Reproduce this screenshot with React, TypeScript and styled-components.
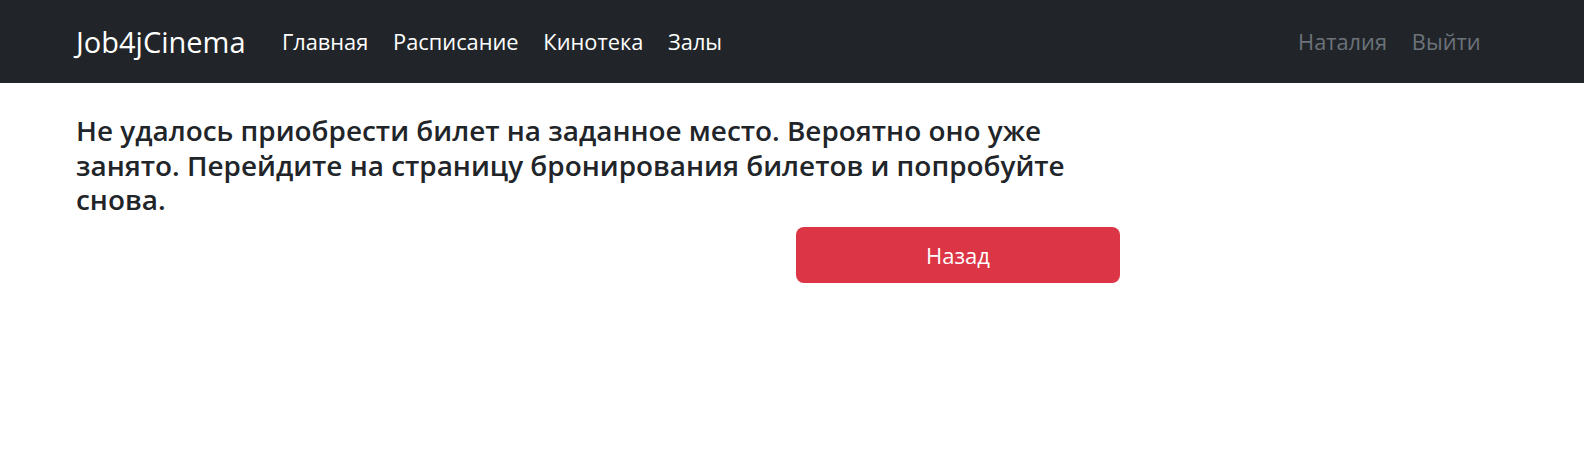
import React from "react";
import styled, { createGlobalStyle } from "styled-components";

const Global = createGlobalStyle`
  html, body { margin: 0; padding: 0; background: #fff; }
  body {
    font-family: "Open Sans", "Noto Sans", "DejaVu Sans", sans-serif;
    color: #212529;
    -webkit-font-smoothing: antialiased;
  }
  * { box-sizing: border-box; }
`;

const NavBar = styled.nav`
  height: 83px;
  background: #212529;
  display: flex;
  align-items: center;
  padding: 0 91px 0 76px;
`;

const Brand = styled.a`
  font-size: 29px;
  color: #fff;
  text-decoration: none;
  margin-right: 24px;
`;

const NavList = styled.div<{ $right?: boolean }>`
  display: flex;
  align-items: center;
  margin-left: ${(p) => (p.$right ? "auto" : "0")};
`;

const NavLink = styled.a<{ $muted?: boolean }>`
  font-size: 21.8px;
  color: ${(p) => (p.$muted ? "#6c737b" : "#fff")};
  text-decoration: none;
  padding: 0 12.4px;
`;

const Main = styled.main`
  padding: 0 0 0 76px;
  width: 1120px;
`;

const Message = styled.h5`
  margin: 30px 0 0;
  max-width: 1040px;
  font-size: 27.9px;
  line-height: 34.5px;
  font-weight: 600;
  color: #212529;
`;

const ButtonRow = styled.div`
  display: flex;
  justify-content: flex-end;
  margin-top: 10px;
`;

const DangerButton = styled.button`
  width: 324px;
  height: 56px;
  background: #dc3545;
  color: #fff;
  border: none;
  border-radius: 8px;
  font-family: inherit;
  font-size: 22px;
  cursor: pointer;
`;

export default function App() {
  return (
    <>
      <Global />
      <NavBar>
        <Brand href="#">Job4jCinema</Brand>
        <NavList>
          <NavLink href="#">Главная</NavLink>
          <NavLink href="#">Расписание</NavLink>
          <NavLink href="#">Кинотека</NavLink>
          <NavLink href="#">Залы</NavLink>
        </NavList>
        <NavList $right>
          <NavLink $muted href="#">Наталия</NavLink>
          <NavLink $muted href="#">Выйти</NavLink>
        </NavList>
      </NavBar>
      <Main>
        <Message>
          Не удалось приобрести билет на заданное место. Вероятно оно уже занято. Перейдите на страницу
          бронирования билетов и попробуйте снова.
        </Message>
        <ButtonRow>
          <DangerButton>Назад</DangerButton>
        </ButtonRow>
      </Main>
    </>
  );
}
